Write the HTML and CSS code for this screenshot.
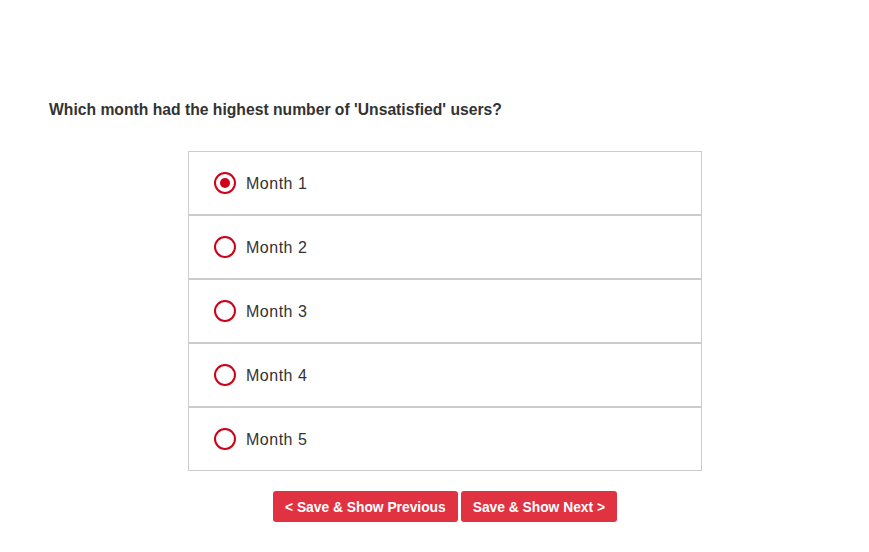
FILE: index.html
```html
<!DOCTYPE html>
<html lang="en">
<head>
    <meta charset="UTF-8">
    <meta name="viewport" content="width=device-width, initial-scale=1.0">
    <title>Question</title>
    <link rel="stylesheet" href="styles.css">
</head>
<body>

<div class="page">
    <h2 class="question">Which month had the highest number of 'Unsatisfied' users?</h2>

    <div class="options">
        <label class="option">
            <input type="radio" name="month" value="1" checked>
            <span class="radio"></span>
            <span class="label">Month 1</span>
        </label>
        <label class="option">
            <input type="radio" name="month" value="2">
            <span class="radio"></span>
            <span class="label">Month 2</span>
        </label>
        <label class="option">
            <input type="radio" name="month" value="3">
            <span class="radio"></span>
            <span class="label">Month 3</span>
        </label>
        <label class="option">
            <input type="radio" name="month" value="4">
            <span class="radio"></span>
            <span class="label">Month 4</span>
        </label>
        <label class="option">
            <input type="radio" name="month" value="5">
            <span class="radio"></span>
            <span class="label">Month 5</span>
        </label>
    </div>

    <div class="actions">
        <button class="btn">&lt; Save &amp; Show Previous</button>
        <button class="btn">Save &amp; Show Next &gt;</button>
    </div>
</div>

</body>
</html>
```

FILE: styles.css
```css
body {
    font-family: "Liberation Sans", Arial, sans-serif;
    margin: 0;
    padding: 0;
    background-color: #fff;
    color: #333;
}

.page {
    padding: 97px 28px 0 49px;
}

.question {
    font-size: 15.7px;
    font-weight: bold;
    margin: 0 0 28px 0;
    line-height: 26px;
    color: #333;
}

.options {
    width: 514px;
    margin: 0 auto;
}

.option {
    display: flex;
    align-items: center;
    height: 62px;
    border: 1px solid #ccc;
    padding-left: 25px;
    cursor: pointer;
}

.option input {
    display: none;
}

.radio {
    width: 18px;
    height: 18px;
    border: 2px solid #d0021b;
    border-radius: 50%;
    position: relative;
    margin-right: 10px;
}

.option input:checked + .radio::after {
    content: "";
    position: absolute;
    top: 4px;
    left: 4px;
    width: 10px;
    height: 10px;
    border-radius: 50%;
    background-color: #d0021b;
}

.label {
    font-size: 16px;
    letter-spacing: 0.5px;
    padding-top: 2px;
    color: #333;
}

.actions {
    display: flex;
    justify-content: center;
    gap: 3px;
    margin-top: 20px;
}

.btn {
    font-family: "Liberation Sans", Arial, sans-serif;
    height: 31px;
    padding: 2px 12px 0 12px;
    background-color: #e03241;
    color: #fff;
    border: none;
    border-radius: 3px;
    font-size: 13.8px;
    font-weight: bold;
    cursor: pointer;
}
```
